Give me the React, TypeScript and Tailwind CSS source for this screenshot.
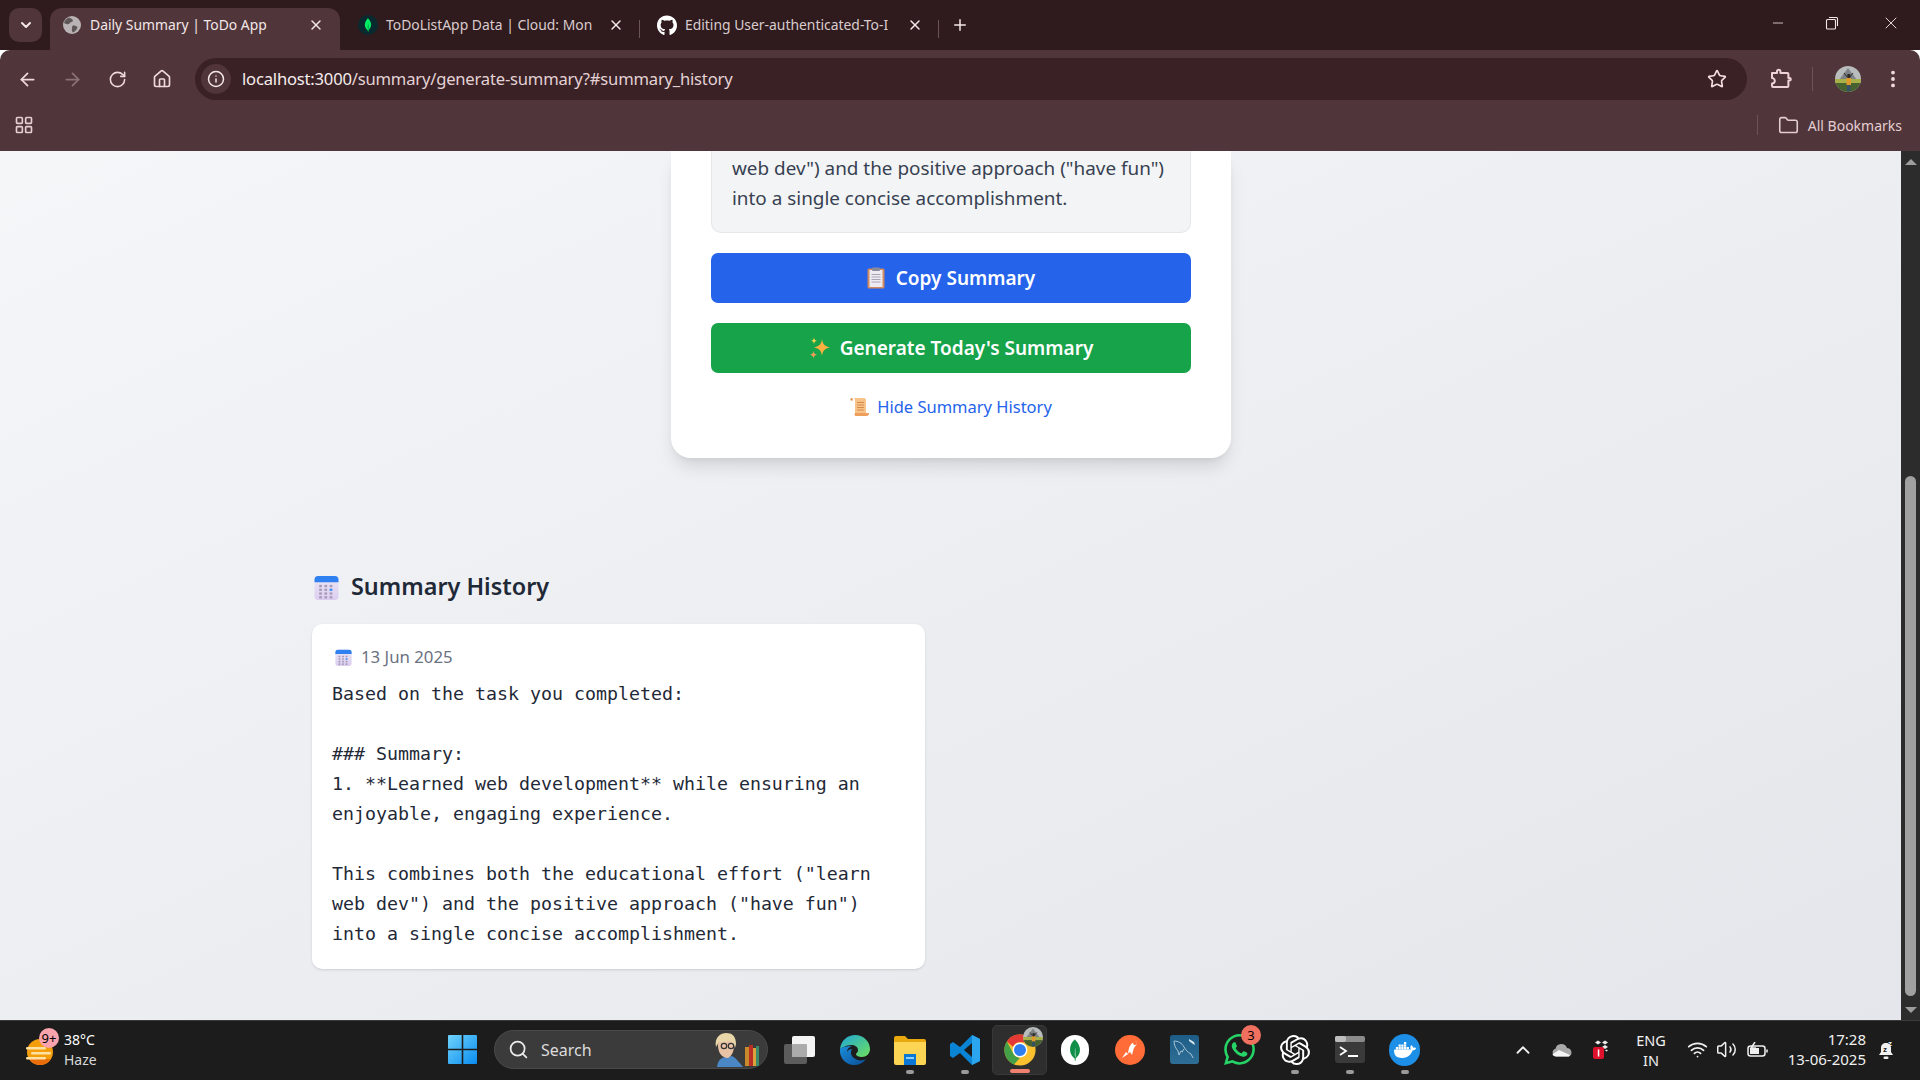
import React from "react";
import { ArrowLeft, ArrowRight, RotateCw, Home, Info, Star, MoreVertical, Folder, LayoutGrid, X, Plus, Minus, ChevronDown, Search, ChevronUp, Wifi, Volume2 } from "lucide-react";
import { FaGithub } from "react-icons/fa";
import { SiMongodb, SiDocker, SiOpenai, SiWhatsapp } from "react-icons/si";

const Calendar = ({ s }: { s: number }) => (
  <svg width={s} height={s} viewBox="0 0 24 24">
    <defs>
      <linearGradient id="calb" x1="0" y1="0" x2="0" y2="1"><stop offset="0" stopColor="#ece8f6" /><stop offset="1" stopColor="#dccdf0" /></linearGradient>
    </defs>
    <rect x="0.5" y="1" width="23" height="23" rx="3.5" fill="url(#calb)" />
    <path d="M0.5 7V4.5A3.5 3.5 0 0 1 4 1h16a3.5 3.5 0 0 1 3.5 3.5V7z" fill="#2f80f0" />
    {[0, 1, 2, 3].map((r) => [0, 1, 2].map((c) => (
      <rect key={`${r}${c}`} x={5 + c * 5} y={9.5 + r * 3.6} width="2.6" height="2.2" fill={r === 1 && c === 2 ? "#3b8ff0" : "#a59bb8"} />
    )))}
  </svg>
);

const Clipboard = () => (
  <svg width="18" height="22" viewBox="0 0 18 22">
    <rect x="0.5" y="1.5" width="17" height="20" rx="1.5" fill="#d08a5f" />
    <rect x="2.5" y="3" width="13" height="17" fill="#eeeaf2" />
    <rect x="5" y="0.5" width="8" height="3.5" rx="1" fill="#8a8a98" />
    {[7, 9.5, 12, 14.5].map((y) => <rect key={y} x="4.5" y={y} width="9" height="1" fill="#a8a4b4" />)}
  </svg>
);

const Sparkles = () => (
  <svg width="22" height="22" viewBox="0 0 22 22">
    <path d="M13 2c.6 5 2.6 7.4 8 8.400-5.400 1-7.400 3.400-8 8.600-.6-5.200-2.600-7.600-8-8.600 5.400-1 7.400-3.400 8-8.400z" fill="#fbb040" />
    <path d="M5 0.500c.3 2 1 2.900 3 3.300-2 .4-2.700 1.300-3 3.300-.3-2-1-2.900-3-3.300 2-.4 2.700-1.300 3-3.300z" fill="#fcd34d" />
    <path d="M4.500 14c.3 2.300 1.200 3.300 3.500 3.800-2.300.5-3.200 1.500-3.500 3.800-.3-2.300-1.200-3.300-3.500-3.800 2.300-.5 3.200-1.500 3.500-3.800z" fill="#f59e5b" />
  </svg>
);

const Scroll = () => (
  <svg width="20" height="20" viewBox="0 0 20 20">
    <path d="M1 1h13c1.500 0 2 1 2 2v13H5V3c0-1-.5-2-2-2z" fill="#f6c48a" />
    <path d="M1 1c1.500 0 2 1 2 2.500H0.500C0.500 2 .5 1 1 1z" fill="#e0914e" />
    <path d="M5 16h14c0 1.800-.8 3-2.500 3H6c-1.500 0-2-1.200-1-3z" fill="#ef9f5c" />
    {[5, 7.500, 10, 12.500].map((y) => <rect key={y} x="7" y={y} width="7" height="1" fill="#d98a4a" />)}
  </svg>
);

const ChromeIcon = () => (
  <svg width="34" height="34" viewBox="0 0 48 48">
    <circle cx="24" cy="24" r="22" fill="#fbc02d" />
    <path d="M24 2a22 22 0 0 1 19 11H24a11 11 0 0 0-10 6.500L5.500 12A22 22 0 0 1 24 2z" fill="#e53935" />
    <path d="M5.500 12 14 28a11 11 0 0 0 10 7l-8.500 9.300A22 22 0 0 1 5.500 12z" fill="#43a047" />
    <circle cx="24" cy="24" r="10.500" fill="#fff" />
    <circle cx="24" cy="24" r="8.500" fill="#2f7ef0" />
  </svg>
);

const Avatar = ({ s }: { s: number }) => (
  <svg width={s} height={s} viewBox="0 0 26 26">
    <defs><clipPath id={`av${s}`}><circle cx="13" cy="13" r="13" /></clipPath></defs>
    <g clipPath={`url(#av${s})`}>
      <rect width="26" height="26" fill="#b9bcbc" />
      <path d="M4 14 13 2l9 12z" fill="#7d8386" />
      <rect y="13" width="26" height="4" fill="#a8b04a" />
      <rect y="17" width="26" height="9" fill="#47612f" />
      <rect x="11.500" y="12" width="4.500" height="7" fill="#e09a2c" />
      <rect x="12" y="19" width="3.500" height="6" fill="#34506a" />
      <rect x="12.300" y="8" width="3" height="4" fill="#2e2a28" />
      <path d="M9 7l3 4M18 7l-3 4" stroke="#2e2a28" strokeWidth="1" />
    </g>
  </svg>
);

const GlobeIcon = () => (
  <svg width="18" height="18" viewBox="0 0 18 18">
    <circle cx="9" cy="9" r="9" fill="#b9b3b5" />
    <path d="M6 1.500c2 1 3.500 1.500 4 3-.5 1.500-2.500 1.500-3.500 3C5.500 9 3 8 1 7 1.500 4.500 3.500 2.500 6 1.500zM10 9.500c2 0 4 .5 4.500 2-1 2.500-2.500 4-4.500 5-1-1-1.500-2.500-1-4 0-1.300 0-2.500 1-3z" fill="#5f5658" />
  </svg>
);

const Tab = ({ icon, title, fade, active }: { icon: React.ReactNode; title: string; fade?: boolean; active?: boolean }) => (
  <div className={`flex items-center h-[42px] pb-[8px] ${active ? "w-[290px] bg-[#50353a] rounded-t-[12px] pl-[12px]" : "w-[299px] pl-[18px]"}`}>
    <span className="w-[20px] flex justify-center shrink-0">{icon}</span>
    <span className={`ml-[8px] text-[13.900px] whitespace-nowrap overflow-hidden ${fade ? "w-[208px] text-[#d9cbcd]" : "w-[214px] text-[#f3e7e8]"}`}>{title}</span>
    <X size={16} strokeWidth={2.2} className={`text-[#f3e7e8] ${active ? "ml-[4px]" : "ml-[14px]"}`} />
  </div>
);

const Dock = ({ children, dot, active }: { children: React.ReactNode; dot?: boolean; active?: boolean }) => (
  <div className={`relative w-[55px] h-[50px] flex items-center justify-center rounded-[5px] ${active ? "bg-[#2e2e2e] border border-[#383838]" : ""}`}>
    {children}
    {dot && <span className="absolute bottom-[1px] left-1/2 -translate-x-1/2 w-[8px] h-[4px] rounded-full bg-[#9a9a9a]" />}
    {active && <span className="absolute bottom-[1px] left-1/2 -translate-x-1/2 w-[20px] h-[4px] rounded-full bg-[#f08070]" />}
  </div>
);

const MONO = `Based on the task you completed:

### Summary:
1. **Learned web development** while ensuring an
enjoyable, engaging experience.

This combines both the educational effort ("learn
web dev") and the positive approach ("have fun")
into a single concise accomplishment.`;

export default function App() {
  return (
    <div className="w-[1920px] h-[1080px] flex flex-col overflow-hidden font-['Noto_Sans',sans-serif]">
      {/* tab strip */}
      <div className="h-[50px] bg-[#2f1b1e] flex items-end shrink-0">
        <div className="ml-[9px] mb-[8px] w-[33px] h-[34px] rounded-[10px] bg-[#50353a] flex items-center justify-center">
          <ChevronDown size={16} strokeWidth={3} className="text-[#f3e7e8]" />
        </div>
        <div className="ml-[8px]">
          <Tab active title="Daily Summary | ToDo App" icon={<GlobeIcon />} />
        </div>
        <Tab fade title="ToDoListApp Data | Cloud: Mon" icon={
          <span className="w-[20px] h-[20px] rounded-full bg-[#082a2e] flex items-center justify-center"><SiMongodb size={14} className="text-[#00ed64]" /></span>
        } />
        <div className="w-[1px] h-[18px] bg-[#6b5458] mb-[12px]" />
        <div className="-ml-[1px]">
          <Tab fade title="Editing User-authenticated-To-I" icon={<FaGithub size={21} className="text-white" />} />
        </div>
        <div className="w-[1px] h-[18px] bg-[#6b5458] mb-[12px]" />
        <Plus size={18} strokeWidth={2} className="text-[#f3e7e8] ml-[12px] mb-[16px]" />
        <div className="ml-auto flex items-center mb-[17px] text-[#f3e7e8]">
          <Minus size={16} strokeWidth={1.2} className="mr-[39px]" />
          <svg width="14" height="14" viewBox="0 0 14 14" fill="none" stroke="currentColor" strokeWidth="1.100" className="mr-[42px]"><rect x="1.500" y="3.500" width="9" height="9.500" rx="1" /><path d="M4 1.500h7.500a1 1 0 0 1 1 1V10" /></svg>
          <X size={20} strokeWidth={1.100} className="mr-[19px]" />
        </div>
      </div>
      {/* toolbar */}
      <div className="h-[101px] bg-[#50353a] rounded-t-[10px] shrink-0 flex flex-col">
        <div className="h-[50px] mt-[8px] flex items-start text-[#eed9dc]">
          <div className="h-[42px] w-[195px] flex items-center shrink-0">
            <ArrowLeft size={21} strokeWidth={2} className="ml-[17px]" />
            <ArrowRight size={21} strokeWidth={2} className="ml-[24px] text-[#8a7377]" />
            <RotateCw size={19} strokeWidth={2} className="ml-[25px]" />
            <Home size={20} strokeWidth={2} className="ml-[25px]" />
          </div>
          <div className="w-[1552px] h-[42px] rounded-full bg-[#392126] flex items-center">
            <div className="ml-[6px] w-[30px] h-[30px] rounded-full bg-[#50353a] flex items-center justify-center shrink-0">
              <Info size={18} strokeWidth={2} className="text-[#f3e7e8]" />
            </div>
            <span className="ml-[11px] text-[16.600px] tracking-[-0.2px] text-[#f6ecec] whitespace-nowrap">localhost:3000<span className="text-[#e4d2d4]">/summary/generate-summary?#summary_history</span></span>
            <Star size={20} strokeWidth={2} className="ml-auto mr-[20px] text-[#f3dde0]" />
          </div>
          <div className="h-[42px] flex items-center flex-1">
            <svg width="22" height="22" viewBox="0 0 22 22" fill="none" stroke="#eed3d7" strokeWidth="2" strokeLinejoin="round" className="ml-[23px]">
              <path d="M2 5h5V3.500a1.700 1.700 0 0 1 3.400 0V5h7a1 1 0 0 1 1 1v4h1.100a1.300 1.300 0 0 1 0 2.600H18.400V18a1 1 0 0 1-1 1H3a1 1 0 0 1-1-1v-2.500c1.500 0 2.800-1.200 2.800-2.700S3.500 10 2 10z" />
            </svg>
            <div className="w-[1px] h-[24px] bg-[#6b5458] ml-[20px]" />
            <div className="ml-[22px]"><Avatar s={26} /></div>
            <MoreVertical size={22} strokeWidth={2.200} className="ml-[21px]" />
          </div>
        </div>
        <div className="flex items-center h-[42px] -mt-[4px] text-[#e3cfd2]">
          <LayoutGrid size={20} strokeWidth={2} className="ml-[14px]" />
          <div className="ml-auto w-[1px] h-[20px] bg-[#6b5458]" />
          <Folder size={21} strokeWidth={1.800} className="ml-[20px]" />
          <span className="ml-[9px] mr-[18px] text-[14px] whitespace-nowrap">All Bookmarks</span>
        </div>
      </div>
      {/* viewport */}
      <div className="h-[869px] flex shrink-0">
        <div className="w-[1901px] h-full overflow-hidden bg-gradient-to-br from-[#f5f6f8] to-[#e4e6eb] flex flex-col">
          <div className="w-[560px] ml-[671px] h-[307px] bg-white rounded-b-[20px] shadow-[0_12px_18px_-4px_rgba(0,0,0,0.12),0_4px_8px_-4px_rgba(0,0,0,0.08)] px-[40px] shrink-0">
            <div className="w-[480px] h-[82px] bg-[#f3f4f6] border border-t-0 border-[#e5e7eb] rounded-b-[10px] px-[20px] pt-[2px] text-[18.900px] leading-[30px] text-[#374151] whitespace-nowrap">
              <div>web dev") and the positive approach ("have fun")</div>
              <div>into a single concise accomplishment.</div>
            </div>
            <button className="mt-[20px] w-full h-[50px] bg-[#2563eb] rounded-[7px] flex items-center justify-center text-white text-[19px] font-semibold">
              <Clipboard /><span className="ml-[11px] pt-[1px]">Copy Summary</span>
            </button>
            <button className="mt-[20px] w-full h-[50px] bg-[#16a34a] rounded-[7px] flex items-center justify-center text-white text-[19px] font-semibold">
              <Sparkles /><span className="ml-[9px] pt-[1px]">Generate Today's Summary</span>
            </button>
            <div className="mt-[20px] h-[28px] flex items-center justify-center text-[#2563eb] text-[16.500px]">
              <Scroll /><span className="ml-[7px]">Hide Summary History</span>
            </div>
          </div>
          <div className="ml-[312px] w-[613px] mt-[114px] shrink-0">
            <div className="flex items-center h-[30px] pl-[2px] text-[#1f2937] text-[23.400px] font-semibold">
              <Calendar s={25} /><span className="ml-[12px]">Summary History</span>
            </div>
            <div className="mt-[22px] h-[345px] bg-white rounded-[10px] shadow-[0_1px_3px_rgba(0,0,0,0.1),0_1px_2px_-1px_rgba(0,0,0,0.1)] px-[20px] pt-[20px]">
              <div className="flex items-center h-[26px] pl-[3px] text-[#6b7280] text-[16.800px]">
                <Calendar s={17} /><span className="ml-[9px]">13 Jun 2025</span>
              </div>
              <pre className="mt-[9px] font-['DejaVu_Sans_Mono',monospace] text-[18.270px] leading-[30px] text-[#1f2937] whitespace-pre-wrap">{MONO}</pre>
            </div>
          </div>
        </div>
        <div className="w-[19px] bg-[#2c2c2c] flex flex-col items-center">
          <svg width="12" height="6" viewBox="0 0 12 6" className="mt-[8px]"><path d="M6 0 12 6H0z" fill="#9e9e9e" /></svg>
          <div className="mt-[311px] w-[11px] h-[520px] rounded-full bg-[#a0a0a0]" />
          <svg width="12" height="6" viewBox="0 0 12 6" className="mt-[11px]"><path d="M6 6 12 0H0z" fill="#9e9e9e" /></svg>
        </div>
      </div>
      {/* taskbar */}
      <div className="h-[60px] bg-[#1c1c1c] border-t border-[#3a3a3a] pb-[2px] flex items-center text-white shrink-0">
        <div className="relative w-[448px] h-full flex items-center shrink-0">
          <svg width="30" height="28" viewBox="0 0 30 28" className="ml-[25px] mt-[5px]">
            <circle cx="15" cy="14" r="13" fill="#f59e0b" />
            <path d="M4 21a13 13 0 0 0 22 0z" fill="#ea6d0c" />
            {[9, 14, 19].map((y) => <rect key={y} x={y === 14 ? 6 : 1} y={y} width="20" height="2.500" rx="1.200" fill="#fde2a3" />)}
          </svg>
          <div className="ml-[9px] text-[14px] leading-[20px] mt-[1px]">
            <div>38°C</div>
            <div className="text-[#d8d8d8]">Haze</div>
          </div>
          <span className="absolute left-[39px] top-[7px] w-[20px] h-[20px] rounded-full bg-[#fba3ac] text-black text-[13px] leading-[20px] text-center">9+</span>
        </div>
        <svg width="29" height="29" viewBox="0 0 29 29" className="shrink-0">
          <defs><linearGradient id="win" x1="0" y1="0" x2="1" y2="1"><stop offset="0" stopColor="#6fd3fb" /><stop offset="1" stopColor="#0a8cf0" /></linearGradient></defs>
          <path d="M0 1a1 1 0 0 1 1-1h12.700v13.700H0zM15.300 0H28a1 1 0 0 1 1 1v12.700H15.300zM0 15.300h13.700V29H1a1 1 0 0 1-1-1zM15.300 15.300H29V28a1 1 0 0 1-1 1H15.300z" fill="url(#win)" />
        </svg>
        <div className="ml-[17px] w-[274px] h-[39px] rounded-full bg-[#3b3b3b] border border-[#4a4a4a] flex items-center shrink-0">
          <Search size={21} strokeWidth={2} className="ml-[13px] text-[#eaeaea]" />
          <span className="ml-[12px] text-[16px] text-[#dcdcdc]">Search</span>
          <svg width="50" height="34" viewBox="0 0 50 34" className="ml-auto mr-[5px] mt-[1px]">
            <path d="M5 34c1-7 4-9 8-10l7-1c4 2 7 6 11 11z" fill="#4a87c4" />
            <path d="M6 12c0 8 4 13 10 13 4-2 6-7 6-13 0-5-3-8-8-8s-8 3-8 8z" fill="#e8c3a6" />
            <path d="M4 14C2 4 9 0 14 0c6 0 10 3 10 11l-1 4c-1-3-3-6-5-7-4 1-9 1-11 1-1 2-2 3-3 5z" fill="#e8d6a8" />
            <circle cx="12" cy="13" r="2.700" fill="none" stroke="#333" strokeWidth="1.200" />
            <circle cx="19" cy="13" r="2.700" fill="none" stroke="#333" strokeWidth="1.200" />
            <rect x="33" y="14" width="4" height="19" fill="#c98a2c" />
            <rect x="37" y="12" width="4" height="21" fill="#b92f25" />
            <rect x="41" y="15" width="3" height="18" fill="#d9a23c" />
            <rect x="44" y="13" width="3" height="20" fill="#3d8a6b" />
          </svg>
        </div>
        <div className="ml-[4px] flex items-center shrink-0">
          <Dock>
            <svg width="31" height="30" viewBox="0 0 31 30"><rect x="0" y="9" width="23" height="20" rx="2" fill="#5c5c5c" /><rect x="8" y="1" width="23" height="21" rx="2" fill="#f4f4f4" /><rect x="8" y="9" width="15" height="13" rx="1" fill="#ababab" /></svg>
          </Dock>
          <Dock>
            <svg width="32" height="32" viewBox="0 0 32 32">
              <defs>
                <linearGradient id="edge" x1="0" y1="0" x2="1" y2="1"><stop offset="0" stopColor="#1ea6d8" /><stop offset="1" stopColor="#6ee05c" /></linearGradient>
                <linearGradient id="edge2" x1="0" y1="0" x2="1" y2="1"><stop offset="0" stopColor="#1b8fdc" /><stop offset="1" stopColor="#0a4d96" /></linearGradient>
              </defs>
              <path d="M1 15C2 6 9 1 16 1c9 0 15 7 15 14 0 5-4 8-8 8-3 0-6-1-6-3 0-1 2-1 2-4 0-3-3-5-7-5-5 0-9 3-11 4z" fill="url(#edge)" />
              <path d="M1 15c-1 9 6 16 14 16 5 0 9-2 12-6-3 2-9 2-12-1-3-2-4-6-2-9-2 0-4 1-5 3 0-3 2-5 5-6-5 0-10 1-12 3z" fill="url(#edge2)" />
            </svg>
          </Dock>
          <Dock dot>
            <svg width="32" height="30" viewBox="0 0 32 30"><path d="M0 3a2 2 0 0 1 2-2h9l3 3h16a2 2 0 0 1 2 2v4H0z" fill="#e8a80e" /><path d="M0 7h32v21a2 2 0 0 1-2 2H2a2 2 0 0 1-2-2z" fill="#fcd555" /><rect x="10" y="19" width="12" height="11" fill="#0a78d4" /><rect x="12" y="22" width="8" height="2" fill="#8fd0ff" /></svg>
          </Dock>
          <Dock dot>
            <svg width="32" height="32" viewBox="0 0 32 32"><path d="M23 1 31 5v22l-8 4-12-12-7 5-3-2v-12l3-2 7 5zM23 9l-8 7 8 7z" fill="#0a84d4" fillRule="evenodd" /><path d="M23 1l8 4v22l-8 4z" fill="#2aa5ee" /></svg>
          </Dock>
          <Dock active>
            <div className="relative w-[34px] h-[34px]">
              <ChromeIcon />
              <span className="absolute -top-[6px] -right-[6px]"><Avatar s={20} /></span>
            </div>
          </Dock>
          <Dock>
            <span className="w-[28px] h-[30px] rounded-full bg-white flex items-center justify-center"><SiMongodb size={22} className="text-[#0f8f48]" /></span>
          </Dock>
          <Dock>
            <svg width="30" height="30" viewBox="0 0 30 30">
              <circle cx="15" cy="15" r="15" fill="#ff6c37" />
              <path d="M7 23l6-5 1-5c1-3 3-5 5-6 1-1 3-1 3 1 0 2-2 3-3 5l-1 3-1 4-2-3z" fill="#fff" />
              <path d="M7 23l4-6 2 2z" fill="#fff" />
              <circle cx="20" cy="8" r="2" fill="#ff6c37" />
            </svg>
          </Dock>
          <Dock>
            <svg width="29" height="29" viewBox="0 0 29 29">
              <defs><linearGradient id="my" x1="0" y1="0" x2="0" y2="1"><stop offset="0" stopColor="#1d5c86" /><stop offset="1" stopColor="#2f6f96" /></linearGradient></defs>
              <rect width="29" height="29" rx="3" fill="url(#my)" />
              <path d="M4 6c4 0 8 2 10 6 2 3 3 5 7 7l2 4M4 6c0 4 2 8 4 10l1 4 2-4 2 1M14 14l-2 3" fill="none" stroke="#a7c4d6" strokeWidth="1" />
              <path d="M19 4l5 3 1 3-2-1-4-3z" fill="#d5e3ec" />
            </svg>
          </Dock>
          <Dock>
            <div className="relative">
              <SiWhatsapp size={31} className="text-[#25d366]" />
              <span className="absolute -top-[9px] -right-[6px] w-[20px] h-[20px] rounded-full bg-[#f0705f] text-black text-[13px] leading-[20px] text-center">3</span>
            </div>
          </Dock>
          <Dock dot>
            <SiOpenai size={30} className="text-white" />
          </Dock>
          <Dock dot>
            <svg width="30" height="27" viewBox="0 0 30 27"><rect width="30" height="27" rx="3" fill="#3a3a3a" /><rect width="30" height="6" rx="2" fill="#8b8b8b" /><rect x="0" y="0" width="11" height="6" rx="2" fill="#bdbdbd" /><path d="M5 11l6 4-6 4" fill="none" stroke="#fff" strokeWidth="1.800" /><rect x="13" y="19" width="10" height="2" fill="#fff" /></svg>
          </Dock>
          <Dock dot>
            <span className="w-[31px] h-[32px] rounded-full bg-[#1d8fe6] flex items-center justify-center"><SiDocker size={22} className="text-white" /></span>
          </Dock>
        </div>
        <div className="ml-[80px] flex items-center shrink-0">
          <ChevronUp size={22} strokeWidth={2} className="text-[#f0f0f0]" />
          <svg width="21" height="14" viewBox="0 0 21 14" className="ml-[18px]">
            <path d="M4 13.500a4 4 0 0 1-.5-7.800A6 6 0 0 1 15 5a4.500 4.500 0 0 1 2 8.500z" fill="#a8a8a8" />
            <path d="M4 13.500c-1.500 0-3-1-3.500-2.300L7 7l11 5c-.5 1-1 1.500-1.500 1.500z" fill="#f4f4f4" />
          </svg>
          <svg width="20" height="20" viewBox="0 0 20 20" className="ml-[20px]">
            <path d="M2 2.500 5 .500l3 2-3 2zM9 2.500l3-2 3 2-3 2zM9 7l3-2 3 2-3 2zM12 10.500l1.500-1 1.500 1-1.500 1z" fill="#ececec" />
            <rect x="0" y="7" width="11" height="12" rx="2" fill="#e0112d" />
            <rect x="4.800" y="9.500" width="1.500" height="7" fill="#fff" />
          </svg>
          <div className="ml-[18px] w-[40px] text-center text-[14.500px] leading-[20px] text-[#f0f0f0]">
            <div>ENG</div>
            <div>IN</div>
          </div>
          <Wifi size={21} strokeWidth={2} className="ml-[16px] text-[#f0f0f0]" />
          <Volume2 size={21} strokeWidth={1.700} className="ml-[8px] text-[#f0f0f0]" />
          <svg width="22" height="16" viewBox="0 0 22 16" className="ml-[10px]" fill="none" stroke="#f0f0f0" strokeWidth="1.500"><rect x="1" y="4" width="17" height="10" rx="2.500" /><path d="M20 7.500v3" /><path d="M3 6h9v6H3z" fill="#f0f0f0" stroke="none" /><path d="M8 0 4 6h4l-2 5" stroke="#f0f0f0" /></svg>
          <div className="ml-[17px] mb-[1px] w-[80px] text-right text-[15px] leading-[20px] text-[#f0f0f0] whitespace-nowrap">
            <div>17:28</div>
            <div>13-06-2025</div>
          </div>
          <svg width="18" height="20" viewBox="0 0 18 20" className="ml-[11px]"><path d="M9 3c-3 0-5 2-5 5v4l-2 3h14l-2-3V8c0-3-2-5-5-5z" fill="#f0f0f0" /><rect x="6.500" y="16.500" width="5" height="2.500" rx="1.200" fill="#f0f0f0" /><text x="6" y="12" fontSize="8" fontWeight="700" fill="#1c1c1c" fontFamily="Liberation Sans">z</text><text x="11" y="6" fontSize="8" fontWeight="700" fill="#f0f0f0" fontFamily="Liberation Sans">z</text></svg>
        </div>
      </div>
    </div>
  );
}
